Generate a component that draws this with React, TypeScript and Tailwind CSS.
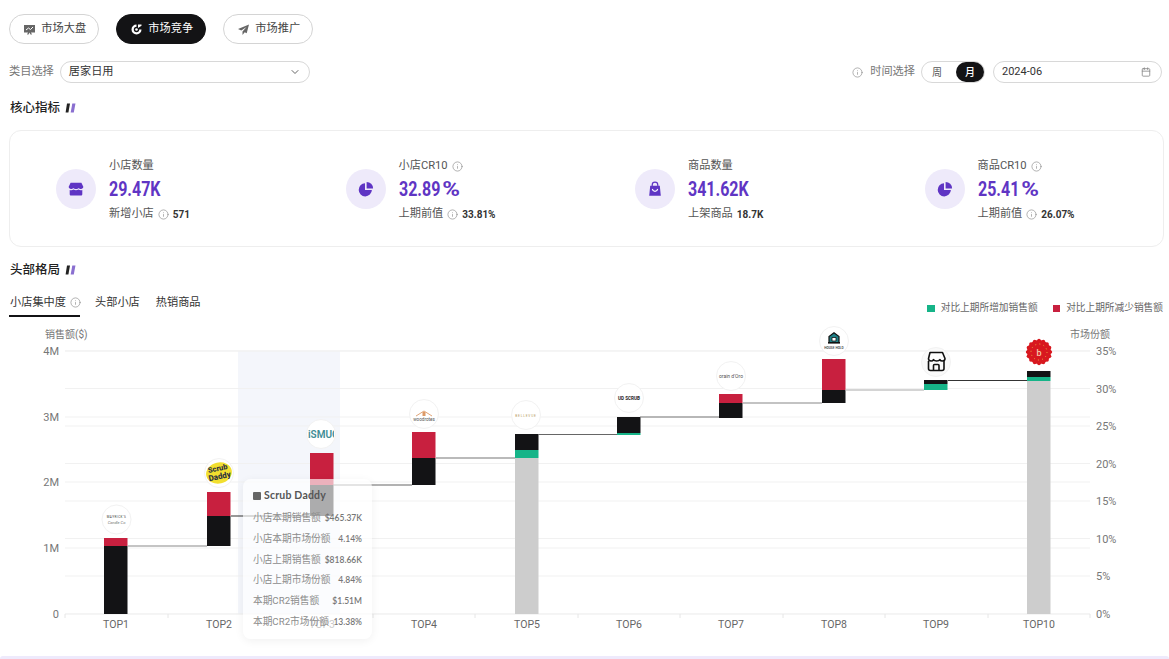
import { Calendar, ChevronDown, Info } from "lucide-react";

const cjk = { fontFamily: '"Roboto", "Noto Sans CJK SC", sans-serif' };

// y positions inside the chart svg are page y minus 320
const bars = [
  { x: 104, parts: [["#c8203f", 538, 546], ["#131315", 546, 614]] },
  { x: 207, parts: [["#c8203f", 492, 516], ["#131315", 516, 546]] },
  { x: 310, parts: [["#c8203f", 453, 485], ["#131315", 485, 516]] },
  { x: 412, parts: [["#c8203f", 432, 458], ["#131315", 458, 485]] },
  { x: 515, parts: [["#131315", 434, 450], ["#16b488", 450, 458], ["#cdcdcd", 458, 614]] },
  { x: 617, parts: [["#131315", 417, 433], ["#16b488", 433, 435]] },
  { x: 719, parts: [["#c8203f", 394, 403], ["#131315", 403, 418]] },
  { x: 822, parts: [["#c8203f", 359, 390], ["#131315", 390, 403]] },
  { x: 924, parts: [["#131315", 380, 384], ["#16b488", 384, 390]] },
  { x: 1027, parts: [["#131315", 371, 377], ["#16b488", 377, 381], ["#cdcdcd", 381, 614]] },
] as { x: number; parts: [string, number, number][] }[];

const links = [
  [128, 207, 546, "#8a8a8a"],
  [231, 310, 516, "#333333"],
  [333, 412, 485, "#666666"],
  [436, 515, 458, "#777777"],
  [538, 617, 434.5, "#666666"],
  [640, 719, 417, "#777777"],
  [743, 822, 403, "#888888"],
  [845, 924, 390, "#aaaaaa"],
  [948, 1027, 380.5, "#333333"],
] as [number, number, number, string][];

const leftTicks = [["4M", 351], ["3M", 417], ["2M", 482], ["1M", 548], ["0", 614]] as [string, number][];
const rightTicks = [
  ["35%", 351], ["30%", 388.5], ["25%", 426], ["20%", 463.5],
  ["15%", 501], ["10%", 538.5], ["5%", 576], ["0%", 614],
] as [string, number][];

const tooltipRows = [
  ["小店本期销售额", "$465.37K"],
  ["小店本期市场份额", "4.14%"],
  ["小店上期销售额", "$818.66K"],
  ["小店上期市场份额", "4.84%"],
  ["本期CR2销售额", "$1.51M"],
  ["本期CR2市场份额", "13.38%"],
];

const sealBumps = Array.from({ length: 16 }, (_, i) => {
  const a = (i * Math.PI) / 8;
  return [1039 + 11.4 * Math.cos(a), 32 + 11.4 * Math.sin(a)];
});

const Slashes = () => (
  <svg width="11" height="10" viewBox="0 0 11 10" className="ml-[5px]">
    <path d="M2 .5h3L3.400 9.500H.6z" fill="#222" />
    <path d="M7.300.5h3.200L8.800 9.500H5.700z" fill="#8a6fd0" />
  </svg>
);

const Pill = ({ label, active, icon }: { label: string; active?: boolean; icon: React.ReactNode }) => (
  <div
    className={`flex h-[30px] w-[89.5px] items-center justify-center gap-[5px] rounded-full border pl-[2px] text-[11.2px] ${
      active ? "border-[#131315] bg-[#131315] text-white" : "border-[#d4d4d4] bg-white text-[#444]"
    }`}
  >
    {icon}
    <span className="pt-px">{label}</span>
  </div>
);

const ShopIcon = () => (
  <svg width="18" height="18" viewBox="0 0 16 16">
    <path d="M3.200 2.500h9.600l1.700 3.600c0 1.200-1 1.900-2 1.900-.8 0-1.700-.4-2.100-1-.5.600-1.300 1-2.400 1s-1.900-.4-2.400-1c-.4.600-1.300 1-2.100 1-1 0-2-.7-2-1.900z" fill="#5f35c4" />
    <path d="M2.400 8.900c1.300.4 2.500.2 3.400-.4.700.4 1.400.6 2.200.6s1.500-.2 2.200-.6c.9.600 2.100.8 3.400.4v3.800c0 .7-.5 1.100-1.100 1.100H3.500c-.6 0-1.100-.4-1.100-1.100z" fill="#5f35c4" />
  </svg>
);

const PieIcon = () => (
  <svg width="16" height="16" viewBox="0 0 16 16">
    <path d="M7 2.200a6.600 6.600 0 1 0 6.900 6.900H7z" fill="#5f35c4" />
    <path d="M8.600 0.900a6.600 6.600 0 0 1 6.500 6.600H8.600z" fill="#5f35c4" />
  </svg>
);

const BagIcon = () => (
  <svg width="16" height="16" viewBox="0 0 16 16">
    <path d="M5.200 5V3.900a2.800 2.800 0 0 1 5.600 0V5" fill="none" stroke="#5f35c4" strokeWidth="1.200" />
    <path d="M3.200 4.800h9.600l1 10H2.200z" fill="#5f35c4" />
    <path d="M5.300 8c.4 1.600 1.400 2.400 2.700 2.400s2.300-.8 2.700-2.400" fill="none" stroke="#fff" strokeWidth="1.100" />
  </svg>
);

const Stat = ({
  icon, label, value, sub, subValue, labelInfo, subInfo,
}: {
  icon: React.ReactNode; label: string; value: string; sub: string; subValue: string; labelInfo?: boolean; subInfo?: boolean;
}) => (
  <div className="flex items-center gap-[13px]">
    <div className="flex h-10 w-10 items-center justify-center rounded-full bg-[#eeeafa]">{icon}</div>
    <div className="flex flex-col pt-[3px]">
      <div className="flex h-[14px] items-center gap-1 text-[11.2px] text-[#555]">
        {label}
        {labelInfo && <Info size={11} strokeWidth={1.4} className="text-[#888]" />}
      </div>
      <div className="mt-[4px] h-[24px] origin-left scale-x-[0.8] text-[20px] leading-[24px] font-bold whitespace-nowrap text-[#5f35c4]">
        {value.replace("%", "")}
        {value.endsWith("%") && <span className="ml-[2px] inline-block w-[22px] origin-left scale-x-[1.5]">%</span>}
      </div>
      <div className="mt-[6px] flex h-[14px] items-center gap-1 text-[11.2px] text-[#555]">
        {sub}
        {subInfo && <Info size={11} strokeWidth={1.4} className="text-[#888]" />}
        <span className="text-[10px] font-bold text-[#333]">{subValue}</span>
      </div>
    </div>
  </div>
);

// small brand marks sitting above each bar
const Logo = ({ cx, cy, children }: { cx: number; cy: number; children?: React.ReactNode }) => (
  <g>
    <circle cx={cx} cy={cy - 320} r="14.5" fill="#fff" stroke="#f2f2f2" />
    {children}
  </g>
);

const Chart = () => (
  <svg width="1169" height="320" viewBox="0 0 1169 320" className="block" style={{ fontFamily: '"Roboto", "Noto Sans CJK SC", sans-serif' }}>
    <rect x="238" y="31" width="102" height="263" fill="#f4f6fb" />
    {rightTicks.map(([, y]) => (
      <line key={`r${y}`} x1="65" x2="1090" y1={y - 320} y2={y - 320} stroke="#f1f1f1" />
    ))}
    {leftTicks.map(([, y]) => (
      <line key={`l${y}`} x1="65" x2="1090" y1={y - 320} y2={y - 320} stroke="#f1f1f1" />
    ))}
    {[65, 168, 270, 373, 475, 578, 680, 783, 885, 988, 1090].map((x) => (
      <line key={x} x1={x} x2={x} y1={294} y2={298} stroke="#e6e6e6" />
    ))}
    <text x="45" y="18" fontSize="10" fill="#777">销售额($)</text>
    <text x="1070" y="18" fontSize="10" fill="#777">市场份额</text>
    {leftTicks.map(([t, y]) => (
      <text key={t} x="59" y={y - 316} fontSize="11" textAnchor="end" fill="#777">{t}</text>
    ))}
    {rightTicks.map(([t, y]) => (
      <text key={t} x="1096" y={y - 316} fontSize="11" fill="#777">{t}</text>
    ))}
    {bars.map((b, i) => (
      <g key={b.x}>
        {b.parts.map(([fill, y1, y2]) => (
          <rect key={y1} x={b.x} y={y1 - 320} width="23.5" height={y2 - y1} fill={fill} />
        ))}
        <text x={b.x + 12} y="308" fontSize="10.5" textAnchor="middle" fill="#666">{`TOP${i + 1}`}</text>
      </g>
    ))}
    {links.map(([x1, x2, y, c]) => (
      <line key={x1} x1={x1} x2={x2} y1={y - 320} y2={y - 320} stroke={c} strokeWidth="1.2" />
    ))}

    <Logo cx={116.5} cy={519.5}>
      <text x="116.5" y="198" fontSize="3" textAnchor="middle" fill="#333" letterSpacing=".5">MAYRICK'S</text>
      <text x="116.5" y="203.500" fontSize="4" textAnchor="middle" fill="#777" fontStyle="italic">Candle Co</text>
    </Logo>
    <Logo cx={219} cy={473}>
      <ellipse cx="219" cy="153" rx="13" ry="10.5" fill="#f2df2f" transform="rotate(-12 219 153)" />
      <text x="218" y="151" fontSize="7.5" fontWeight="800" textAnchor="middle" fill="#2a3040" transform="rotate(-12 218 150)">Scrub</text>
      <text x="220" y="159" fontSize="8" fontWeight="800" textAnchor="middle" fill="#2a3040" transform="rotate(-12 220 158)">Daddy</text>
    </Logo>
    <clipPath id="ismug"><rect x="308" y="100" width="26" height="30" /></clipPath>
    <Logo cx={321} cy={434}>
      <text x="308" y="118" fontSize="10" fontWeight="600" fill="#3d8c95" clipPath="url(#ismug)">iSMUG</text>
    </Logo>
    <Logo cx={424} cy={414}>
      <path d="M416 96l8-5 8 5" fill="none" stroke="#dd9a66" strokeWidth=".9" />
      <rect x="422.5" y="92" width="3" height="4" fill="#dd9a66" />
      <text x="424" y="101" fontSize="4.6" textAnchor="middle" fill="#555">woodrotes</text>
    </Logo>
    <Logo cx={526} cy={415}>
      <text x="526" y="96.500" fontSize="3.2" textAnchor="middle" fill="#b59a5c" letterSpacing=".8">BELLEVUE</text>
    </Logo>
    <Logo cx={629} cy={398}>
      <text x="629" y="80" fontSize="4.6" fontWeight="700" textAnchor="middle" fill="#222">UD SCRUB</text>
    </Logo>
    <Logo cx={731} cy={376}>
      <text x="731" y="58" fontSize="5" textAnchor="middle" fill="#555">orain d'Oro</text>
    </Logo>
    <Logo cx={834} cy={341}>
      <path d="M829 22.500v-6l5-3.800 5 3.800v6z" fill="#1e7f86" stroke="#111" strokeWidth="1.200" />
      <path d="M832 21v-3.500h4V21z" fill="#fff" stroke="#111" strokeWidth=".8" />
      <rect x="828" y="22" width="12" height="1.600" fill="#111" />
      <text x="834" y="29" fontSize="3.200" fontWeight="500" textAnchor="middle" fill="#333">HOUSE HOLD</text>
    </Logo>
    <g>
      <circle cx="936" cy="42" r="14.500" fill="#fafafa" stroke="#f2f2f2" />
      <path d="M930 32.500h12.500l2.500 6c0 1.500-1.200 2.500-2.700 2.500-1 0-2-.6-2.400-1.400-.5.800-1.500 1.400-3.200 1.400s-2.700-.6-3.200-1.400c-.4.800-1.400 1.400-2.400 1.400-1.500 0-2.600-1-2.600-2.500z" fill="#fff" stroke="#111" strokeWidth="1.600" strokeLinejoin="round" />
      <path d="M928.500 41v7.500a2 2 0 0 0 2 2h11.500a2 2 0 0 0 2-2V41M933.500 50.500v-5a1 1 0 0 1 1-1h3.500a1 1 0 0 1 1 1v5" fill="none" stroke="#111" strokeWidth="1.600" />
    </g>
    <g>
      {sealBumps.map(([x, y], i) => (
        <circle key={i} cx={x} cy={y} r="1.800" fill="#d8181f" />
      ))}
      <circle cx="1039" cy="32" r="12" fill="#d8181f" />
      <circle cx="1039" cy="32" r="8" fill="none" stroke="#e9b03a" strokeWidth="1" strokeDasharray="1 3.200" />
      <text x="1039" y="35.500" fontSize="9" fontWeight="500" textAnchor="middle" fill="#f3c9a8">b</text>
    </g>
  </svg>
);

export default function App() {
  return (
    <div className="relative h-[659px] w-[1169px] overflow-hidden bg-white" style={cjk}>
      <div className="px-[9px] pt-[14px]">
        <div className="flex gap-[17.5px]">
          <Pill
            label="市场大盘"
            icon={
              <svg width="13" height="13" viewBox="0 0 13 13">
                <path d="M1 2h11v7.500H8l1 2H7.500l-1-2-1 2H4l1-2H1z" fill="#666" />
                <path d="M3 7l2.500-2 2 1.500L10 4" fill="none" stroke="#fff" strokeWidth="1" />
              </svg>
            }
          />
          <Pill
            label="市场竞争"
            active
            icon={
              <svg width="13" height="13" viewBox="0 0 13 13">
                <path d="M6.500 1.500a5 5 0 1 0 5 5H9.200a2.700 2.700 0 1 1-2.700-2.700z" fill="#fff" />
                <circle cx="6.500" cy="6.500" r="1.300" fill="#fff" />
                <path d="M8 1.500l3.500 0v1.200L8 5z" fill="#fff" />
              </svg>
            }
          />
          <Pill
            label="市场推广"
            icon={
              <svg width="13" height="13" viewBox="0 0 13 13">
                <path d="M12 1.500L1 6l3.300 1.600L9.500 4 5.500 8.500V12l2.200-2.700 2 1z" fill="#666" />
              </svg>
            }
          />
        </div>

        <div className="mt-[17px] -mr-[2px] flex h-[22px] items-center justify-between">
          <div className="flex items-center gap-[6px]">
            <span className="text-[11.2px] text-[#777]">类目选择</span>
            <div className="flex h-[22px] w-[250px] items-center justify-between rounded-full border border-[#d8d8d8] pr-[8px] pl-[8px] text-[11.2px] text-[#333]">
              居家日用
              <ChevronDown size={12} className="text-[#666]" />
            </div>
          </div>
          <div className="flex items-center">
            <Info size={11} strokeWidth={1.4} className="text-[#888]" />
            <span className="ml-[7px] text-[11.2px] text-[#777]">时间选择</span>
            <div className="ml-[6px] flex h-[22px] w-[64px] items-center justify-between rounded-full border border-[#d8d8d8] pl-[10px] text-[10px] text-[#555]">
              周
              <span className="flex h-5 w-[28px] items-center justify-center rounded-full bg-[#131315] font-medium text-white">月</span>
            </div>
            <div className="ml-[8px] flex h-[22px] w-[169px] items-center justify-between rounded-full border border-[#d8d8d8] pr-[10px] pl-[8px] text-[11px] text-[#333]">
              2024-06
              <Calendar size={10} className="text-[#888]" />
            </div>
          </div>
        </div>

        <div className="mt-[16px] flex h-[18px] items-center pl-px text-[12.5px] font-medium text-[#222]">
          核心指标
          <Slashes />
        </div>

        <div className="mt-[13px] grid h-[117px] w-[1155px] grid-cols-[repeat(4,289.5px)] items-center rounded-xl border border-[#eeeeee] pl-[46px]">
          <Stat icon={<ShopIcon />} label="小店数量" value="29.47K" sub="新增小店" subInfo subValue="571" />
          <Stat icon={<PieIcon />} label="小店CR10" labelInfo value="32.89%" sub="上期前值" subInfo subValue="33.81%" />
          <Stat icon={<BagIcon />} label="商品数量" value="341.62K" sub="上架商品" subValue="18.7K" />
          <Stat icon={<PieIcon />} label="商品CR10" labelInfo value="25.41%" sub="上期前值" subInfo subValue="26.07%" />
        </div>

        <div className="mt-[14px] flex h-[18px] items-center pl-px text-[12.5px] font-medium text-[#222]">
          头部格局
          <Slashes />
        </div>

        <div className="mt-[17px] -mr-[3px] flex h-[21px] items-start justify-between">
          <div className="flex gap-[15px] text-[11.2px] text-[#333]">
            <div className="flex h-[21px] w-[71px] items-start gap-[4px] border-b-2 border-[#131315] pl-px leading-[14px] whitespace-nowrap">
              小店集中度
              <Info size={11} strokeWidth={1.4} className="mt-px shrink-0 text-[#888]" />
            </div>
            <span className="leading-[14px]">头部小店</span>
            <span className="pl-px leading-[14px]">热销商品</span>
          </div>
          <div className="flex items-center gap-[15px] pt-[5px] text-[9.7px] text-[#666]">
            <span className="flex items-center gap-[6px]">
              <i className="block h-[7.5px] w-[7.5px] bg-[#16b488]" />
              对比上期所增加销售额
            </span>
            <span className="flex items-center gap-[6px]">
              <i className="block h-[7.5px] w-[7.5px] bg-[#c8203f]" />
              对比上期所减少销售额
            </span>
          </div>
        </div>
      </div>

      <div className="relative mt-[3px]">
        <Chart />
        {/* tooltip floats over the third bar */}
        <div className="absolute top-[159px] left-[243px] h-[160px] w-[129px] rounded-lg bg-white/65 px-[10px] pt-[10px] shadow-[0_2px_10px_rgba(0,0,0,0.06)]">
          <div className="flex h-[14px] items-center gap-[3px] text-[10.5px] font-bold tracking-[0.2px] text-[#555]" style={{ fontFamily: '"Lato", "Noto Sans CJK SC", sans-serif' }}>
            <i className="block h-[8px] w-[8px] rounded-[1px] bg-[#666]" />
            Scrub Daddy
          </div>
          <div className="mt-[8px] flex h-[118px] flex-col justify-between">
            {tooltipRows.map(([k, v]) => (
              <div key={k} className="flex items-center justify-between text-[9.7px] leading-[14px] text-[#8c8c8c]">
                <span>{k}</span>
                <span className="text-[8.5px] font-semibold text-[#777]" style={{ fontFamily: '"Lato", sans-serif' }}>{v}</span>
              </div>
            ))}
          </div>
        </div>
      </div>

      <div className="absolute inset-x-0 bottom-0 h-[3px] rounded-t-sm bg-[#eeeafc]" />
    </div>
  );
}
